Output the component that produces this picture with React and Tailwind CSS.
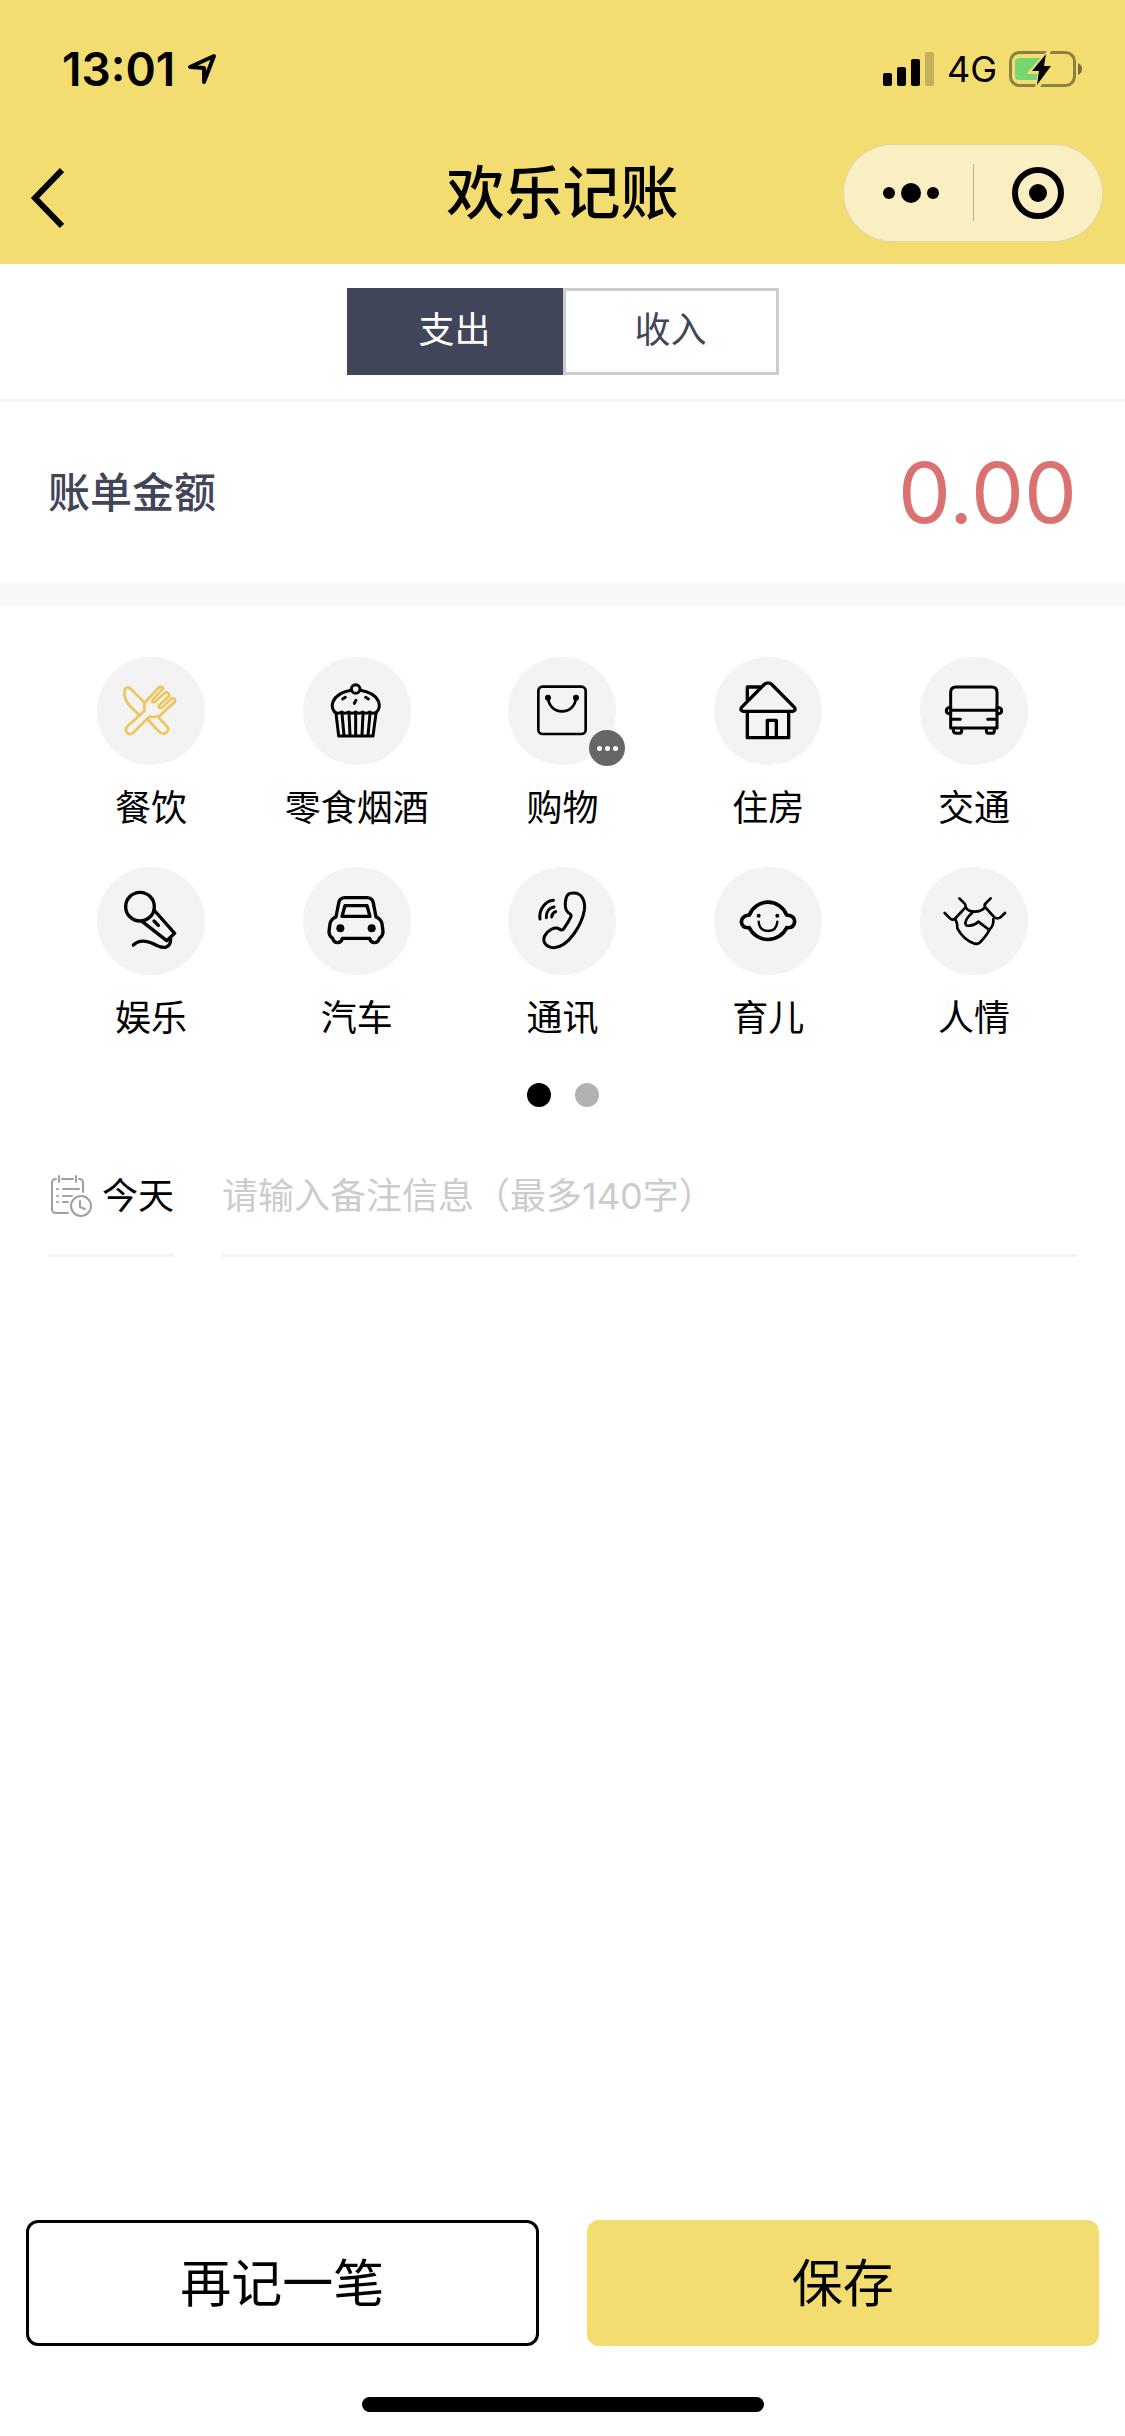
import { useState } from "react";

const strokeProps = {
    fill: "none",
    stroke: "currentColor",
    strokeLinecap: "round",
    strokeLinejoin: "round",
};

function Icon({ width = 8, children }) {
    return (
        <svg viewBox="0 0 180 180" strokeWidth={width} className="size-[60px] overflow-visible" aria-hidden="true" {...strokeProps}>
            {children}
        </svg>
    );
}

const categories = [
    {
        name: "餐饮",
        icon: (
            <Icon width={8}>
                <path d="M70 65 L32 26 Q20 13 12 24 Q5 48 24 72 L56 104" />
                <path d="M82 117 L112 150 Q122 162 134 156 Q147 147 138 136 L110 107" />
                <path d="M70 66 L112 21 Q121 12 127 22 L95 56 Q91 64 101 64 L133 34 Q144 33 145 44 L113 74 Q112 82 122 81 L152 52 Q164 51 162 62 L116 104 Q98 110 85 107 L36 156 Q26 163 18 155 Q11 147 18 137 L70 90 Z" />
            </Icon>
        ),
    },
    {
        name: "零食烟酒",
        icon: (
            <Icon width={9}>
                <circle cx="86" cy="24" r="13" />
                <path d="M23 93 Q12 80 18 62 Q30 35 72 28" />
                <path d="M100 28 Q142 35 154 60 Q162 80 149 93" />
                <path d="M23 93 q10 7 21 0 q10 7 21 0 q10 7 21 0 q10 7 21 0 q10 7 21 0 q10 7 21 0" />
                <path d="M27 97 L35 165 H138 L147 97 M45 98 L51 163 M66 98 L69 163 M86 98 V163 M108 98 L105 163 M129 98 L123 163" />
                <path d="M47 54 l8 -5 M82 67 l5 -9 M116 49 l8 5" />
            </Icon>
        ),
    },
    {
        name: "购物",
        badge: true,
        icon: (
            <Icon width={8}>
                <rect x="19" y="17" width="142" height="142" rx="13" />
                <circle cx="48" cy="50" r="5" fill="currentColor" />
                <circle cx="132" cy="50" r="5" fill="currentColor" />
                <path d="M48 50 C50 76 68 91 90 91 C112 91 130 76 132 50" />
            </Icon>
        ),
    },
    {
        name: "住房",
        icon: (
            <Icon width={10}>
                <path d="M80 9 Q90 2 100 9 L170 80 Q174 90 164 91 H16 Q6 90 10 80 Z" />
                <path d="M28 58 V18 H66 M28 92 V170 H152 V92 M88 170 V118 H115 V170" />
            </Icon>
        ),
    },
    {
        name: "交通",
        icon: (
            <Icon width={9}>
                <path d="M20 141 V34 Q20 18 36 18 H143 Q159 18 159 34 V141 Z M20 88 H159" />
                <path d="M20 79 Q7 80 7 89 Q7 98 20 99 M159 79 Q173 80 173 89 Q173 98 159 99" />
                <path d="M24 115 H49 M131 115 H155" />
                <path d="M28 142 V149 Q29 157 37 157 H45 Q53 157 53 149 V142 M127 142 V149 Q127 157 135 157 H143 Q151 157 151 149 V142" />
            </Icon>
        ),
    },
    {
        name: "娱乐",
        icon: (
            <Icon width={10}>
                <circle cx="57" cy="47" r="43" />
                <path d="M99 57 L161 127 L137 149 L64 92 M99 90 L112 103" />
                <path d="M37 162 C52 148 70 147 92 156 C115 167 125 172 136 168 Q149 163 149 144" />
            </Icon>
        ),
    },
    {
        name: "汽车",
        icon: (
            <Icon width={10}>
                <path d="M54 20 Q38 20 35 36 L27 78 Q12 84 9 98 L6 122 Q6 134 17 142 Q20 155 33 155 Q44 154 46 142 H128 Q130 154 141 155 Q154 155 157 142 Q168 134 168 122 L165 98 Q162 84 147 78 L139 36 Q136 20 120 20 Z" />
                <path d="M54 44 H120 L129 76 H45 Z" />
                <circle cx="40" cy="112" r="12" fill="currentColor" stroke="none" />
                <circle cx="134" cy="112" r="12" fill="currentColor" stroke="none" />
            </Icon>
        ),
    },
    {
        name: "通讯",
        icon: (
            <Icon width={9}>
                <path d="M122 6 C150 4 161 30 157 58 C150 100 110 168 66 170 C42 170 30 152 38 135 C46 118 70 105 82 114 Q90 121 96 112 C106 98 112 88 117 77 Q119 70 110 66 C96 55 99 35 102 22 Q106 6 122 6 Z" />
                <path d="M24 84 C20 55 40 30 64 28 M43 80 C42 62 52 50 66 48 M59 78 Q60 66 71 62" />
            </Icon>
        ),
    },
    {
        name: "育儿",
        icon: (
            <Icon width={11}>
                <path d="M34 72 A60 60 0 0 1 146 72 Q170 74 170 92 Q168 112 146 110 A62 62 0 0 1 34 110 Q12 112 10 92 Q12 74 34 72 Z" />
                <path strokeWidth="7" d="M62 92 Q64 120 90 120 Q116 120 118 92" />
                <circle cx="62" cy="74" r="6" fill="currentColor" stroke="none" />
                <circle cx="118" cy="74" r="6" fill="currentColor" stroke="none" />
            </Icon>
        ),
    },
    {
        name: "人情",
        icon: (
            <Icon width={8}>
                <path d="M46 22 L62 38 Q67 44 64 50 L32 84 Q24 88 18 82 L2 66" />
                <path d="M140 22 L126 36 Q120 42 123 48 L152 80 Q160 84 168 80 L183 66" />
                <path d="M34 86 Q40 94 40 112 Q60 148 92 158 Q104 161 112 150 Q130 130 136 116 Q150 104 148 84" />
                <path d="M66 50 Q72 62 92 62 Q112 62 122 50 M86 64 Q66 82 64 96 Q64 106 78 104 Q94 102 103 92 L136 117" />
            </Icon>
        ),
    },
];

function StatusBar() {
    return (
        <div className="flex h-[141px] items-center justify-between pr-[42px] pb-1 pl-[62px]">
            <div className="flex items-center gap-3">
                <span className="font-[Inter] text-[46px] leading-[54px] font-semibold">13:01</span>
                <svg viewBox="0 0 30 32" className="h-8 w-[30px]" aria-label="定位" strokeWidth="4" {...strokeProps}>
                    <path d="M27 3 L3 14 L17 15 L17 29 Z" />
                </svg>
            </div>
            <div className="flex items-center gap-3">
                <svg viewBox="0 0 52 34" className="h-[34px] w-[52px]" aria-label="信号">
                    <rect x="0" y="21" width="9" height="13" rx="2" />
                    <rect x="14" y="15" width="9" height="19" rx="2" />
                    <rect x="28" y="7" width="9" height="27" rx="2" />
                    <rect x="42" y="0" width="9" height="34" rx="2" opacity="0.2" />
                </svg>
                <span className="font-[Inter] text-[36px] leading-[54px]">4G</span>
                <svg viewBox="0 0 74 36" className="h-9 w-[74px]" aria-label="充电中">
                    <rect x="1.5" y="1.5" width="64" height="33" rx="9" fill="none" stroke="#000" strokeOpacity="0.42" strokeWidth="3" />
                    <path d="M69 12 Q73 14 73 18 Q73 22 69 24 Z" opacity="0.5" />
                    <path d="M10 7 H32 L18 23 H29 L28 29 H10 Q6 29 6 25 V11 Q6 7 10 7 Z" fill="#76d672" />
                    <path d="M38 0 L18 22 H29 L26 36 H31 L45 15 H36 L42 0 Z" fill="#f3dd71" />
                    <path d="M37 3 L23 20 H30 L28 34 L42 15 H35 Z" />
                </svg>
            </div>
        </div>
    );
}

function NavBar() {
    return (
        <div className="grid h-[123px] grid-cols-[1fr_auto_1fr] items-center px-[22px] pb-5">
            <button type="button" aria-label="返回" className="justify-self-start pt-2.5 pl-2">
                <svg viewBox="0 0 34 62" className="h-[62px] w-[34px]" fill="none" stroke="currentColor" strokeWidth="6">
                    <path d="M32 3 L5 31 L32 59" />
                </svg>
            </button>
            <h1 className="text-[58px] leading-[72px] font-medium">欢乐记账</h1>
            <div className="flex h-[98px] w-[260px] items-center justify-self-end rounded-full border border-black/10 bg-[#f9efc3]">
                <button type="button" aria-label="更多" className="flex w-1/2 items-center justify-center gap-1.5 pl-1.5">
                    <span className="size-3 rounded-full bg-black" />
                    <span className="size-5 rounded-full bg-black" />
                    <span className="size-3 rounded-full bg-black" />
                </button>
                <span className="h-[57px] w-px bg-black/25" />
                <button type="button" aria-label="关闭" className="flex w-1/2 items-center justify-center">
                    <span className="flex size-[52px] items-center justify-center rounded-full border-6 border-black">
                        <span className="size-[18px] rounded-full bg-black" />
                    </span>
                </button>
            </div>
        </div>
    );
}

export default function App() {
    const [type, setType] = useState("支出");
    const [category, setCategory] = useState("餐饮");
    const [amount, setAmount] = useState("0.00");
    const [note, setNote] = useState("");

    return (
        <div className="flex min-h-screen flex-col bg-white font-[Inter,'Noto_Sans_CJK_SC',sans-serif] text-black">
            <header className="bg-[#f3dd71]">
                <StatusBar />
                <NavBar />
            </header>

            <div className="flex justify-center border-b-3 border-[#f3f3f3] py-6">
                {["支出", "收入"].map((t) => (
                    <button
                        key={t}
                        type="button"
                        onClick={() => setType(t)}
                        className={`h-[87px] w-[216px] border-3 pb-1 text-[36px] leading-[54px] ${
                            type === t ? "border-[#41455a] bg-[#41455a] text-white" : "border-[#ccc] bg-white text-[#41455a]"
                        }`}
                    >
                        {t}
                    </button>
                ))}
            </div>

            <div className="flex h-[204px] items-center justify-between border-b-24 border-[#f8f8f8] px-12 pt-0.5">
                <label htmlFor="amount" className="text-[42px] leading-[60px] font-medium text-[#41455a]">账单金额</label>
                <input
                    id="amount"
                    type="text"
                    inputMode="decimal"
                    value={amount}
                    onChange={(e) => setAmount(e.target.value)}
                    className="h-[102px] w-1/2 text-right text-[84px] leading-[102px] text-[#db7272] outline-none"
                />
            </div>

            <main className="px-12 pt-[51px]">
                <div className="grid grid-cols-5 gap-y-8">
                    {categories.map((c) => (
                        <button key={c.name} type="button" onClick={() => setCategory(c.name)} className="flex flex-col items-center gap-4">
                            <span
                                className={`relative flex size-[108px] items-center justify-center rounded-full bg-[#f3f3f3] ${
                                    category === c.name ? "text-[#ecc65c]" : "text-black"
                                }`}
                            >
                                {c.icon}
                                {c.badge && (
                                    <span className="absolute -right-[9px] -bottom-px flex size-9 items-center justify-center gap-[3px] rounded-full bg-[#666]">
                                        <span className="size-[5px] rounded-full bg-white" />
                                        <span className="size-[5px] rounded-full bg-white" />
                                        <span className="size-[5px] rounded-full bg-white" />
                                    </span>
                                )}
                            </span>
                            <span className="text-[36px] leading-[54px]">{c.name}</span>
                        </button>
                    ))}
                </div>

                <div className="mt-[38px] flex justify-center gap-6">
                    <span className="size-6 rounded-full bg-black" />
                    <span className="size-6 rounded-full bg-[#b2b2b2]" />
                </div>

                <div className="mt-[30px] flex gap-12">
                    <button type="button" className="flex h-[120px] items-center gap-2.5 border-b-3 border-[#f3f3f3] pl-0.5">
                        <svg viewBox="0 0 42 42" className="size-[42px] text-[#a0a0a0]" strokeWidth="2" aria-hidden="true" {...strokeProps}>
                            <path d="M6 4 Q2 4 2 8 V34 Q2 38 6 38 H18 M12 4 H23 M29 4 Q33 4 33 8 V17 M9 1 V7 M26 1 V7" />
                            <path d="M7 14 h1 M13 14 H29 M7 21 h1 M13 21 H22 M7 27 h1 M13 27 H18" />
                            <circle cx="31" cy="31" r="10" />
                            <path d="M30 26 V32 L35 34" />
                        </svg>
                        <span className="text-[36px] leading-[54px]">今天</span>
                    </button>
                    <input
                        type="text"
                        aria-label="备注"
                        maxLength={140}
                        value={note}
                        onChange={(e) => setNote(e.target.value)}
                        placeholder="请输入备注信息（最多140字）"
                        className="h-[120px] min-w-0 flex-1 border-b-3 border-[#f3f3f3] text-[36px] outline-none placeholder:text-[#ccc]"
                    />
                </div>
            </main>

            <footer className="mt-auto px-[26px] pb-6">
                <div className="grid grid-cols-2 gap-12">
                    <button type="button" className="h-[126px] rounded-xl border-3 border-black bg-white pt-0.5 text-[51px] leading-[72px]">
                        再记一笔
                    </button>
                    <button type="button" className="h-[126px] rounded-xl bg-[#f3dd71] pt-0.5 text-[51px] leading-[72px]">
                        保存
                    </button>
                </div>
                <div className="mx-auto mt-[51px] h-[15px] w-[402px] rounded-full bg-black" />
            </footer>
        </div>
    );
}
